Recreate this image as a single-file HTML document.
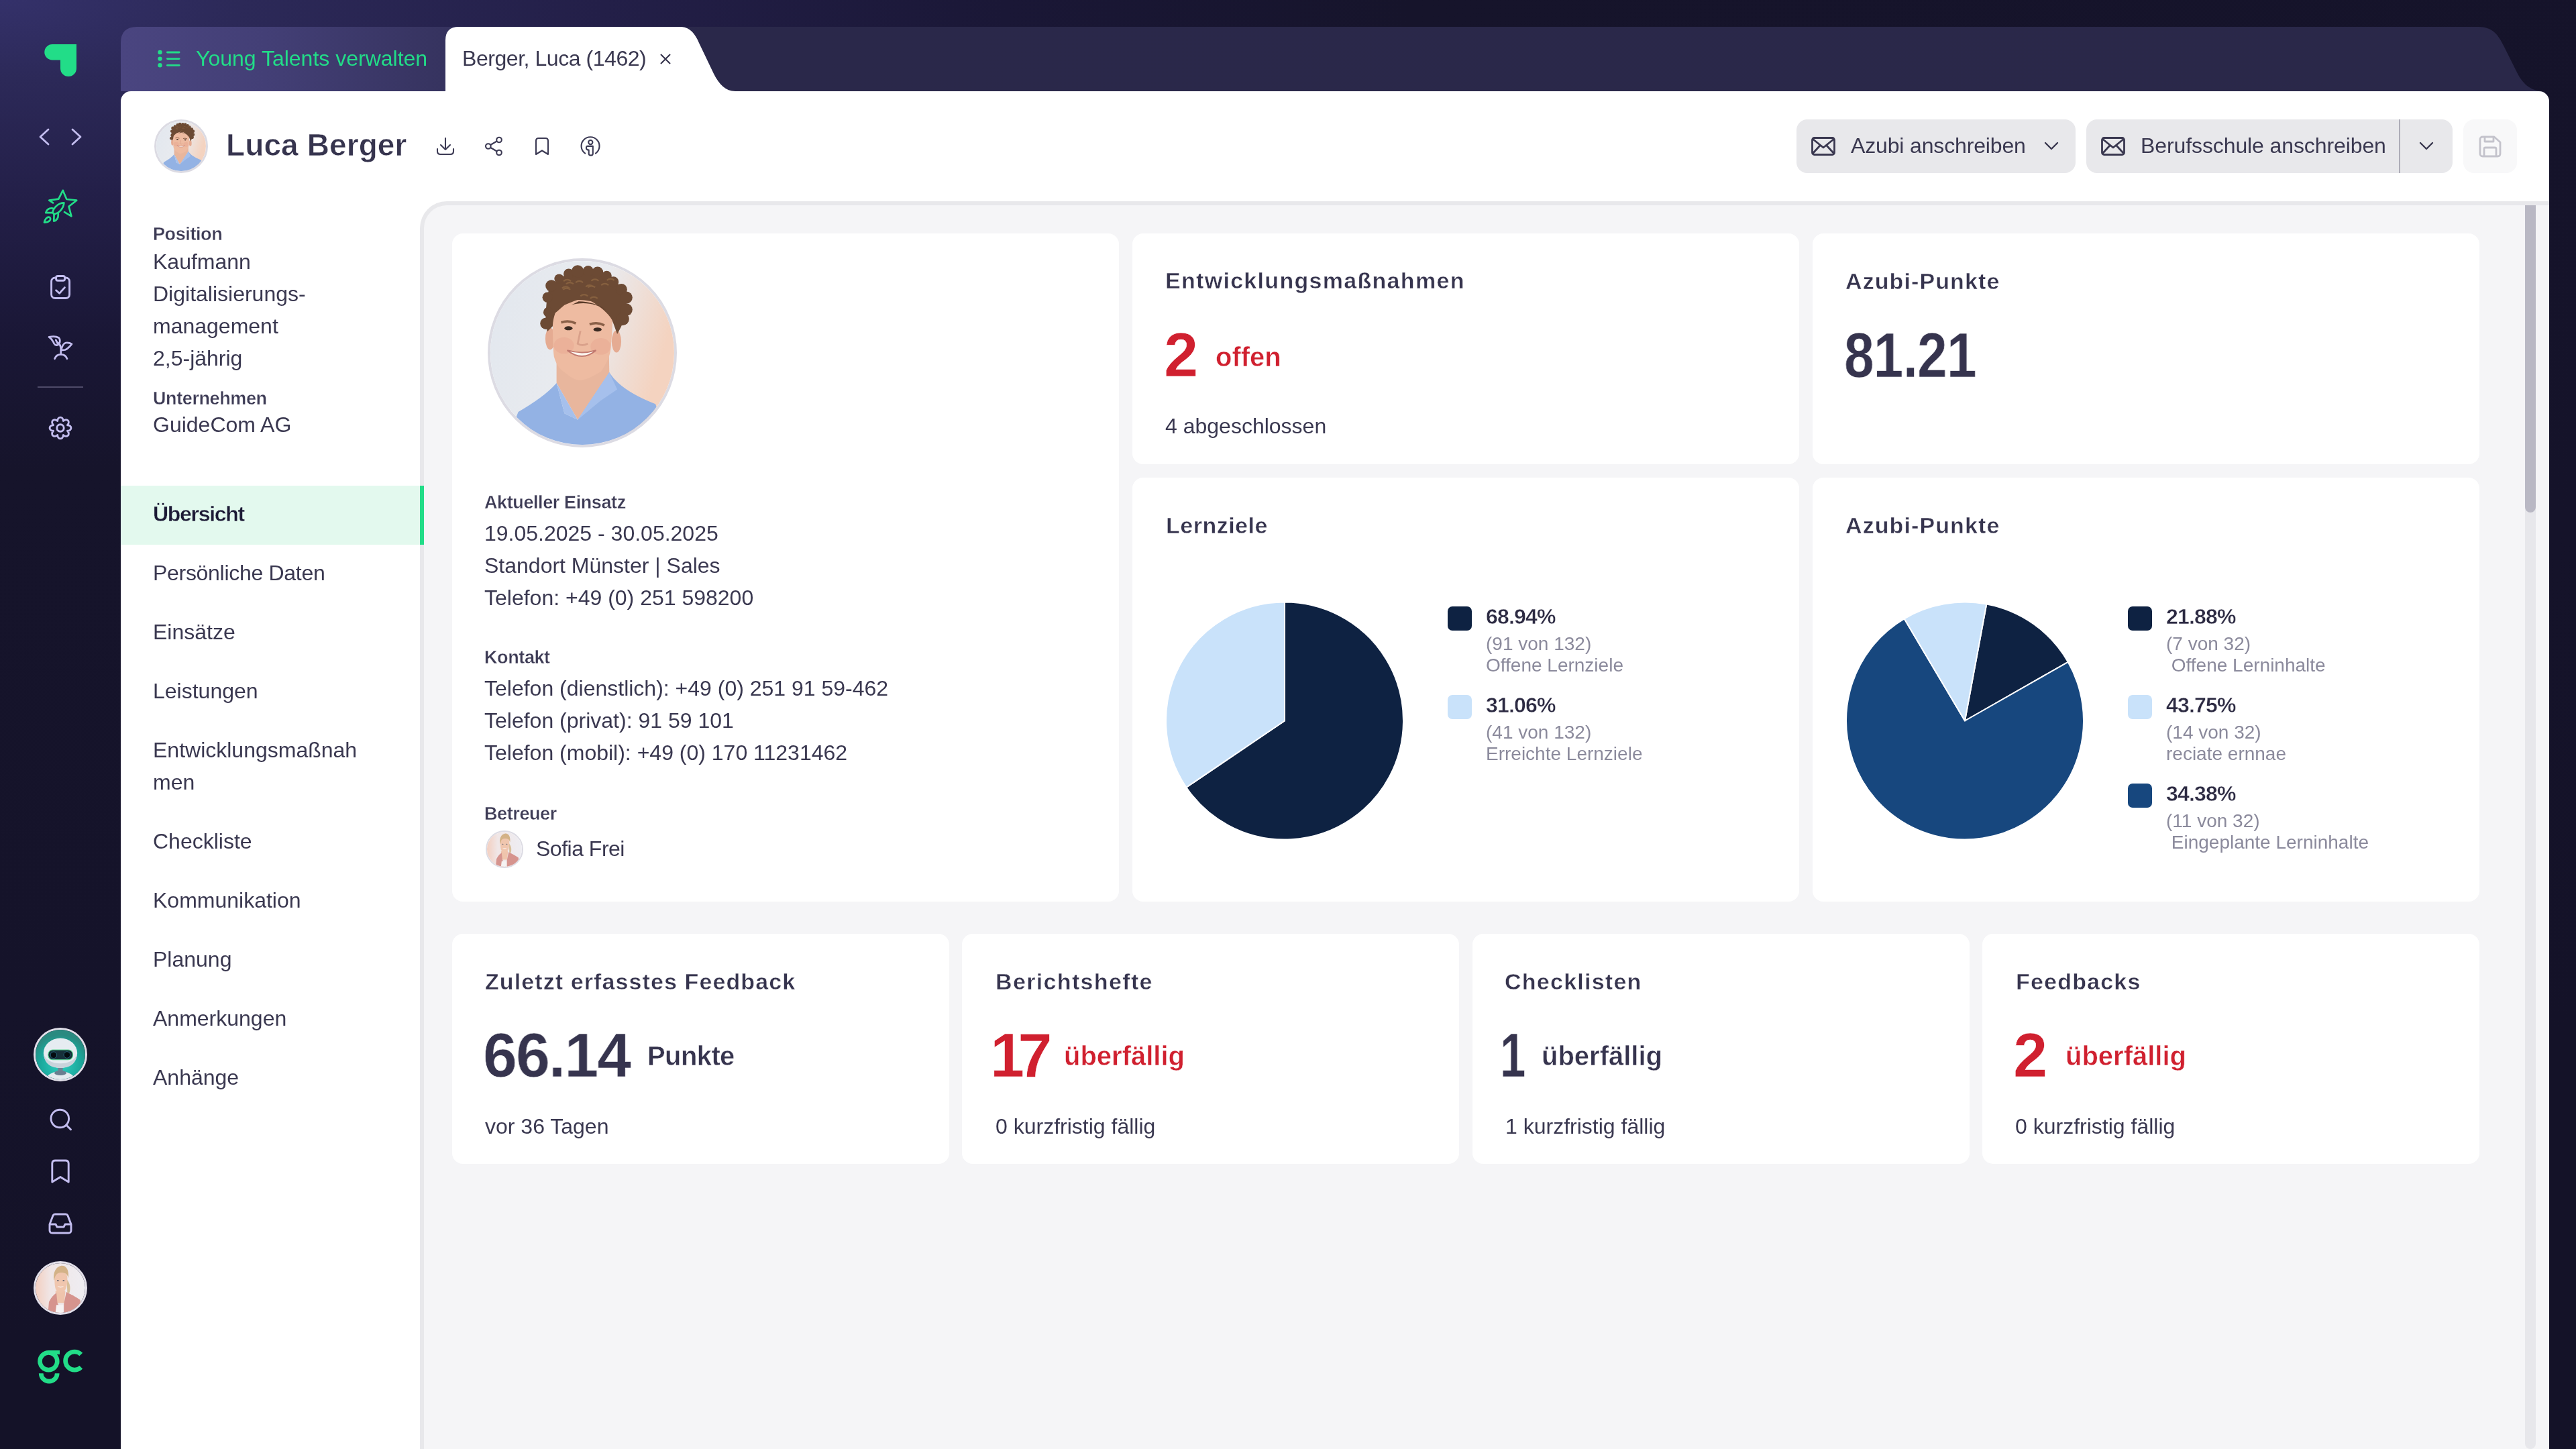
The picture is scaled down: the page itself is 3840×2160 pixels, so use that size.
<!DOCTYPE html>
<html><head><meta charset="utf-8">
<style>
*{box-sizing:border-box;margin:0;padding:0}
html,body{width:3840px;height:2160px;overflow:hidden;-webkit-font-smoothing:antialiased}
.a{will-change:transform}
body{position:relative;font-family:"Liberation Sans",sans-serif;color:#3a3850;
background:radial-gradient(6000px 2000px at 0 0,#34316a 0%,#2c2958 6%,#231f48 15%,#1a1736 25%,#16142b 35%,#15132a 75%,#141228 100%);}
.a{position:absolute;white-space:nowrap}
.t32{font-size:32px;line-height:32px}
.t28{font-size:28px;line-height:28px}
.lbl{font-size:27px;line-height:28px;font-weight:700;letter-spacing:-0.4px;color:#3d3b55;-webkit-text-stroke:0.35px #fff}
.ttl{font-size:34px;line-height:34px;font-weight:700;letter-spacing:1.1px;color:#36344e;-webkit-text-stroke:0.45px #fff}
.card{position:absolute;background:#fff;border-radius:16px}
.red{color:#d0202f}
svg{position:absolute;overflow:visible}
</style></head><body>


<svg width="0" height="0" style="position:absolute;left:0;top:0">
<defs>
<linearGradient id="gman" x1="0" y1="0" x2="1" y2="0.3"><stop offset="0" stop-color="#e2e7ee"/><stop offset="0.6" stop-color="#e9ebef"/><stop offset="1" stop-color="#f4d3c0"/></linearGradient>
<linearGradient id="gwom" x1="0" y1="0" x2="1" y2="0"><stop offset="0" stop-color="#f3cfc0"/><stop offset="0.3" stop-color="#f0e6e6"/><stop offset="1" stop-color="#eeedf2"/></linearGradient>
<radialGradient id="grob" cx="0.5" cy="0.7" r="0.6"><stop offset="0" stop-color="#2fd0c0"/><stop offset="0.7" stop-color="#1aa69a"/><stop offset="1" stop-color="#2a8a80"/></radialGradient>
<symbol id="man" viewBox="0 0 100 100">
<rect width="100" height="100" fill="url(#gman)"/>
<path d="M36,52 L36,66.4 L47.5,86.4 L64.7,60.6 L64.5,50 Z" fill="#e8b69d"/>
<path d="M8,100 L15.2,82.1 C24,77 31,72 36,66.4 L40.3,82.9 L47.5,86.4 L64.7,60.6 C68,66 75,72 89.8,77.8 L98,100 Z" fill="#93b2e4"/>
<path d="M36,66.4 L40.3,82.9 L47.5,86.4 Z M64.7,60.6 L47.5,86.4 L60,76 L69,69.9 Z" fill="#a6c0ec"/>
<ellipse cx="32.5" cy="42.3" rx="2.6" ry="6" fill="#e5ab92"/><ellipse cx="68.6" cy="43.8" rx="2.6" ry="6" fill="#e5ab92"/>
<path d="M33.9,28 L33.9,35.5 C34,44 34.2,49 34.6,52 C36,57 38,59 40.3,60.6 C44,63.5 46,64.9 48.9,64.9 C53,64.5 57,62 60.4,59.9 C63,56 65,52 65.4,48.4 C66,42 66.5,36 66.5,30 C63,24 56,21 48,21 C40,21 35,24 33.9,28 Z" fill="#eebba1"/>
<ellipse cx="40" cy="46" rx="5.5" ry="4.5" fill="#e39a88" opacity="0.3"/><ellipse cx="60" cy="46.5" rx="5.5" ry="4.5" fill="#e39a88" opacity="0.3"/>
<path d="M31,38.4 C30,34 30,30 30.3,26.9 C30.5,22 31,19 31.7,16.1 C33,13 34.5,12 36,11.1 C38,9 40,8 41.8,7.5 C44,6.5 46,6.2 47.5,6.1 C50,5.5 52,5.3 54.7,5.4 C57,6 59.5,6.8 61.8,7.5 C64,8.5 66.5,10 68.3,11.1 C70,13 71.5,14.5 72.6,16.1 C73.5,18 74,20 74,21.9 C74,24 73.8,26 73.3,28.3 C73,30.5 72.5,32 71.9,34.1 C71,36 70,38 69,39.8 C68,37 67,34 66.1,31.9 C65,30 63.5,28.5 61.8,26.9 C59,24.5 57,23 54.7,21.9 C52,21.5 50,21.2 47.5,21.2 C45,22 42.5,23 40.3,24 C38.5,25.5 37,27 35.3,28.3 C34.5,30.5 34,33 33.9,35.5 Z" fill="#6c4a34"/>
<circle cx="31.1" cy="19.8" r="2.8" fill="#6c4a34"/><circle cx="33.2" cy="13.5" r="3.2" fill="#6c4a34"/><circle cx="37.4" cy="9.7" r="2.6" fill="#6c4a34"/><circle cx="42.6" cy="7.0" r="2.8" fill="#6c4a34"/><circle cx="47.5" cy="5.7" r="3.4" fill="#6c4a34"/><circle cx="53.2" cy="5.4" r="2.8" fill="#6c4a34"/><circle cx="58.3" cy="6.2" r="3.1" fill="#6c4a34"/><circle cx="63.3" cy="8.1" r="2.7" fill="#6c4a34"/><circle cx="66.9" cy="11.4" r="2.9" fill="#6c4a34"/><circle cx="71.3" cy="15.5" r="3.1" fill="#6c4a34"/><circle cx="74.0" cy="19.9" r="3.3" fill="#6c4a34"/><circle cx="73.9" cy="26.5" r="3.4" fill="#6c4a34"/><circle cx="72.0" cy="31.6" r="3.5" fill="#6c4a34"/><circle cx="31.6" cy="27.9" r="2.8" fill="#6c4a34"/><circle cx="30.3" cy="34.0" r="3.2" fill="#6c4a34"/><path d="M46.4,11.7 q2,-1.6 4,0" stroke="#86603f" stroke-width="0.8" fill="none"/><path d="M54.9,10.8 q2,-1.6 4,0" stroke="#86603f" stroke-width="0.8" fill="none"/><path d="M51.9,14.0 q2,-1.6 4,0" stroke="#86603f" stroke-width="0.8" fill="none"/><path d="M39.5,15.6 q2,-1.6 4,0" stroke="#86603f" stroke-width="0.8" fill="none"/><path d="M39.0,14.8 q2,-1.6 4,0" stroke="#86603f" stroke-width="0.8" fill="none"/><path d="M39.8,11.0 q2,-1.6 4,0" stroke="#86603f" stroke-width="0.8" fill="none"/><path d="M49.0,19.1 q2,-1.6 4,0" stroke="#86603f" stroke-width="0.8" fill="none"/><path d="M41.2,12.5 q2,-1.6 4,0" stroke="#86603f" stroke-width="0.8" fill="none"/><path d="M54.3,20.4 q2,-1.6 4,0" stroke="#86603f" stroke-width="0.8" fill="none"/><path d="M53.0,14.4 q2,-1.6 4,0" stroke="#86603f" stroke-width="0.8" fill="none"/><path d="M63.4,10.5 q2,-1.6 4,0" stroke="#86603f" stroke-width="0.8" fill="none"/><path d="M60.3,13.2 q2,-1.6 4,0" stroke="#86603f" stroke-width="0.8" fill="none"/><path d="M44,24 C50,22 58,23 63,27 C60,24 54,22 48,22 Z" fill="#5a3c2a"/>
<path d="M38.5,33.5 Q42.5,32 46.5,34 M54,34.5 Q58,33 62,35" stroke="#8a6048" stroke-width="1.3" fill="none"/>
<ellipse cx="42.5" cy="36.6" rx="2.2" ry="1.1" fill="#3a2a22"/><ellipse cx="58.3" cy="37.3" rx="2.2" ry="1.1" fill="#3a2a22"/>
<path d="M49,38 L47.5,45 Q50,46.5 53,45" stroke="#d9a08a" stroke-width="1" fill="none"/>
<path d="M41.8,48.6 Q50,55 57.5,48.6 Q50,51 41.8,48.6 Z" fill="#fbf6f0" stroke="#c27a70" stroke-width="0.7"/>
</symbol>
<symbol id="wom" viewBox="0 0 100 100">
<rect width="100" height="100" fill="url(#gwom)"/>
<path d="M63,33 C70,40 71,52 68,60 L64,60 Z" fill="#d8bf9a"/>
<path d="M40,56 L42,80 L58,80 L60,56 Z" fill="#efc4ac"/>
<path d="M25,100 L27,78 C32,68 38,62 42,60 L44,80 L55,100 Z M57,100 L57,82 L62,58 C70,62 82,68 90,74 L92,100 Z" fill="#d6948e"/>
<path d="M42,84 L56,84 L56,100 L40,100 Z" fill="#f6f3f3"/>
<path d="M38.5,30 C38,22 43,18 51,18 C59,18 64,22 64,30 C64.5,42 62,52 58,56 C55,59 53,59.5 51,59.5 C49,59.5 46,59 43,56 C39,52 38,42 38.5,30 Z" fill="#f0c6ae"/>
<path d="M37,34 C35,20 40,7 52,5 C62,4 68,14 66,30 C64,22 60,19 51,19 C44,19 39,24 38,34 Z" fill="#d3b287"/>
<ellipse cx="45" cy="35" rx="2" ry="1" fill="#3a4a66"/><ellipse cx="56.5" cy="35" rx="2" ry="1" fill="#3a4a66"/>
<path d="M44,46 Q51,52 57,46 Q51,48.5 44,46 Z" fill="#fff"/>
</symbol>
<symbol id="rob" viewBox="0 0 100 100">
<rect width="100" height="100" fill="url(#grob)"/>
<rect x="45" y="76" width="10" height="8" fill="#6f8494"/>
<path d="M20,100 C24,90 34,84 50,84 C66,84 76,90 80,100 Z" fill="#e4ebef"/>
<ellipse cx="50" cy="87" rx="12" ry="5" fill="#6a7f90"/>
<ellipse cx="50" cy="47" rx="34" ry="30" fill="#e6ecf1"/>
<path d="M16,48 C18,70 32,77 50,77 C68,77 82,70 84,48 C80,62 66,68 50,68 C34,68 20,62 16,48 Z" fill="#c9d3db"/>
<rect x="25.5" y="40.5" width="49.5" height="20" rx="9" fill="#17303a" stroke="#58d890" stroke-width="1.4"/>
<circle cx="36.4" cy="51" r="6.5" fill="#050c10" stroke="#2b7e9c" stroke-width="1"/><circle cx="63.3" cy="50.7" r="6.5" fill="#050c10" stroke="#2b7e9c" stroke-width="1"/>
</symbol>
</defs></svg>

<!-- tab bar -->
<svg style="left:0;top:0" width="3840" height="140">
<defs>
<linearGradient id="tbg" gradientUnits="userSpaceOnUse" x1="180" y1="0" x2="3792" y2="0">
<stop offset="0" stop-color="#4a4580"/><stop offset="0.06" stop-color="#433f76"/><stop offset="0.134" stop-color="#36335f"/><stop offset="0.24" stop-color="#2a284a"/><stop offset="1" stop-color="#2a2849"/>
</linearGradient>
</defs>
<path d="M180,136 V64 Q180,40 204,40 H3694 C3716,40 3724,52 3732,68 L3752,108 C3762,128 3775,136 3792,136 Z" fill="url(#tbg)"/>
<path d="M664,136 V60 Q664,40 684,40 H1014 C1028,40 1036,50 1042,64 L1064,110 C1072,126 1082,136 1096,136 Z" fill="#fff"/>
</svg>

<!-- white panel -->
<div class="a" style="left:180px;top:136px;width:3620px;height:2024px;background:#fff;border-radius:15px 15px 0 0"></div>


<!-- sidebar -->
<svg style="left:66px;top:66px" width="48" height="48" viewBox="0 0 48 48"><path d="M12,0 H48 V36 A12,12 0 0 1 24,36 V23.5 H12 A11.75,11.75 0 0 1 12,0 Z" fill="#22dd88"/></svg>
<svg style="left:52px;top:186px" width="76" height="36" viewBox="0 0 76 36" fill="none" stroke="#c3bdef" stroke-width="2.8" stroke-linecap="round" stroke-linejoin="round"><path d="M20,7 L8,18 L20,29"/><path d="M56,7 L68,18 L56,29"/></svg>
<svg style="left:60px;top:278px" width="60" height="60" viewBox="0 0 60 60" fill="none" stroke="#22dd88" stroke-width="2.7" stroke-linejoin="round" stroke-linecap="round">
<path d="M19,24.4 L13.3,20.7 L27.3,18.6 L33.7,5.8 L39.3,19 L54.2,20.7 L42.6,29.8 L46.4,44.3 L36,38.1"/>
<path d="M35.4,24.4 C27,24.6 20,31 18.4,38.5 L20.3,41.3 C28,40 34.5,33 35.4,24.4 Z"/>
<path d="M18.8,32.6 C14,32 10,33.5 8.2,39.2 L17.5,39.2"/>
<path d="M20.6,42 L20.2,51.6 C24,51 27,48 26.8,40.8"/>
<path d="M6,53.6 C7,48.5 10,45.2 13,45.6 C15.5,46 15.7,49 14,51 C12,53 9,53.6 6,53.6 Z"/>
</svg>
<svg style="left:72px;top:410px" width="36" height="36" viewBox="0 0 36 36" fill="none" stroke="#c3bdef" stroke-width="2.9" stroke-linejoin="round" stroke-linecap="round">
<rect x="4.6" y="4" width="27" height="30.5" rx="5.5"/><rect x="11.6" y="1.5" width="13" height="6.8" rx="2.5" fill="#1f1c40"/><path d="M11.6,22.7 L16.6,27.3 L24.4,18.6"/></svg>
<svg style="left:66px;top:490px" width="48" height="56" viewBox="0 0 48 56" fill="none" stroke="#c3bdef" stroke-width="2.7" stroke-linejoin="round" stroke-linecap="round">
<path d="M7,12.4 C12,11.3 18,11.3 21.6,13.5 C23.8,15.5 23.8,20 22,23 C20,25.5 16,25 14.5,22 C13,18 11,15 7,12.4 Z"/>
<path d="M17.3,16.8 L19.6,21.6"/>
<path d="M19.6,20.5 C22.8,22.5 24.7,25.5 24.7,30 V37.5"/>
<path d="M25.2,31.8 C26.5,26 28,22 32,21 C36,20.5 39,21.5 41,22.8 C38,26.5 35,30 31,31.5 C29,32 27,32 25.2,31.8 Z"/>
<path d="M15.5,44.8 C17,40.5 20.5,38.3 24.7,38.3 C29,38.3 32.5,40.5 34,44.8"/>
</svg>
<div class="a" style="left:56px;top:576px;width:68px;height:2px;background:#4e4a68"></div>
<svg style="left:72px;top:620px" width="36" height="36" viewBox="0 0 36 36" fill="none" stroke="#c3bdef" stroke-width="2.9" stroke-linejoin="round"><path d="M13.68,7.56 C13.91,0.27 22.09,0.27 22.32,7.56 C27.64,2.57 33.43,8.36 28.44,13.68 C35.73,13.91 35.73,22.09 28.44,22.32 C33.43,27.64 27.64,33.43 22.32,28.44 C22.09,35.73 13.91,35.73 13.68,28.44 C8.36,33.43 2.57,27.64 7.56,22.32 C0.27,22.09 0.27,13.91 7.56,13.68 C2.57,8.36 8.36,2.57 13.68,7.56 Z"/><circle cx="18" cy="18" r="5.2"/></svg>

<!-- robot avatar -->
<div class="a" style="left:50px;top:1532px;width:80px;height:80px;border-radius:50%;border:3px solid #e2dfe9;overflow:hidden"><svg width="74" height="74" style="position:absolute;left:0;top:0"><use href="#rob"/></svg></div>
<svg style="left:72px;top:1650px" width="36" height="36" viewBox="0 0 36 36" fill="none" stroke="#c3bdef" stroke-width="2.9" stroke-linecap="round"><circle cx="17.3" cy="17.5" r="13.3"/><path d="M26.8,27 L33.5,33.8"/></svg>
<svg style="left:76px;top:1728px" width="28" height="36" viewBox="0 0 28 36" fill="none" stroke="#c3bdef" stroke-width="2.9" stroke-linejoin="round"><path d="M1.8,6.5 Q1.8,2 6.3,2 H21.7 Q26.2,2 26.2,6.5 V34 L14,26.5 L1.8,34 Z"/></svg>
<svg style="left:72px;top:1808px" width="36" height="32" viewBox="0 0 36 32" fill="none" stroke="#c3bdef" stroke-width="2.9" stroke-linejoin="round"><path d="M2,17 L7,4 Q8,2 10,2 H26 Q28,2 29,4 L34,17 V26 Q34,30 30,30 H6 Q2,30 2,26 Z"/><path d="M2,17 H11 L13,21 H23 L25,17 H34"/></svg>
<!-- user avatar -->
<div class="a" style="left:50px;top:1880px;width:80px;height:80px;border-radius:50%;border:3px solid #e2dfe9;overflow:hidden"><svg width="74" height="74" style="position:absolute;left:0;top:0"><use href="#wom"/></svg></div>
<svg style="left:50px;top:2005px" width="80" height="65" viewBox="0 0 80 65" fill="none" stroke="#22dd88" stroke-width="6.7">
<circle cx="22.4" cy="24.2" r="12.85"/><rect x="22.4" y="8" width="16.6" height="6" fill="#22dd88" stroke="none"/>
<path d="M11.2,42.2 A12,12 0 0 0 35.2,42.2"/>
<path d="M70.8,14 A13.6,13.6 0 1 0 70.8,33.2"/></svg>

<!-- tab contents -->
<svg style="left:234px;top:74px" width="36" height="28" viewBox="0 0 36 28" fill="#22dd88"><circle cx="4.5" cy="4" r="3.2"/><circle cx="4.5" cy="13.6" r="3.2"/><circle cx="4.5" cy="23.3" r="3.2"/><rect x="14" y="2.6" width="20.5" height="2.8" rx="1.4"/><rect x="14" y="12.2" width="20.5" height="2.8" rx="1.4"/><rect x="14" y="21.9" width="20.5" height="2.8" rx="1.4"/></svg>
<div class="a t32" style="left:292px;top:70.5px;color:#22dd88">Young Talents verwalten</div>
<div class="a t32" style="left:689px;top:70.5px;color:#3a3850;letter-spacing:-0.45px">Berger, Luca (1462)</div>
<svg style="left:984px;top:80px" width="16" height="16" viewBox="0 0 16 16" stroke="#3a3850" stroke-width="2.2"><path d="M1,1 L15,15 M15,1 L1,15"/></svg>


<!-- header -->
<div class="a" style="left:230px;top:178px;width:80px;height:80px;border-radius:50%;border:3px solid #dcdbe3;overflow:hidden"><svg width="74" height="74" style="position:absolute;left:0;top:0"><use href="#man"/></svg></div>
<div class="a" style="left:337px;top:193px;font-size:46px;line-height:46px;font-weight:700;color:#36344e;letter-spacing:0.1px;-webkit-text-stroke:0.6px #fff">Luca Berger</div>
<svg style="left:650px;top:204px" width="28" height="28" viewBox="0 0 28 28" fill="none" stroke="#3c3a54" stroke-width="2.1" stroke-linecap="round" stroke-linejoin="round"><path d="M14,2 V19 M7,12 L14,19 L21,12"/><path d="M2,18 V21.5 Q2,26 6.5,26 H21.5 Q26,26 26,21.5 V18"/></svg>
<svg style="left:722px;top:203px" width="28" height="30" viewBox="0 0 28 30" fill="none" stroke="#3c3a54" stroke-width="2.1"><circle cx="22" cy="5.5" r="3.8"/><circle cx="5.8" cy="15" r="3.8"/><circle cx="22" cy="24.5" r="3.8"/><path d="M9.2,13 L18.6,7.5 M9.2,17 L18.6,22.5"/></svg>
<svg style="left:796px;top:204px" width="24" height="28" viewBox="0 0 24 28" fill="none" stroke="#3c3a54" stroke-width="2.1" stroke-linejoin="round"><path d="M3,6 Q3,2 7,2 H17 Q21,2 21,6 V26 L12,20.5 L3,26 Z"/></svg>
<svg style="left:865px;top:203px" width="30" height="30" viewBox="0 0 30 30" fill="none" stroke="#3c3a54" stroke-width="2.1" stroke-linecap="round" stroke-linejoin="round"><path d="M7.2,25.7 A13.5,13.5 0 1 1 22.9,25.7"/><circle cx="15.3" cy="9.1" r="3.1"/><path d="M10.8,14.9 H18.8 V26 Q18.8,28.6 15.8,28.6 Q12.7,28.6 12.7,26 V20.5 Q8.9,20.5 8.9,17.7 Q8.9,14.9 10.8,14.9 Z"/></svg>

<!-- buttons -->
<div class="a" style="left:2678px;top:178px;width:416px;height:80px;border-radius:16px;background:#e8e8eb"></div>
<svg style="left:2700px;top:204px" width="36" height="28" viewBox="0 0 36 28" fill="none" stroke="#3a3850" stroke-width="2.8" stroke-linejoin="round"><rect x="1.5" y="1.5" width="33" height="25" rx="3"/><path d="M2,3 L18,16 L34,3 M2,25 L13,13 M34,25 L23,13"/></svg>
<div class="a t32" style="left:2759px;top:201px;color:#3a3850;letter-spacing:-0.15px">Azubi anschreiben</div>
<svg style="left:3047px;top:211px" width="22" height="14" viewBox="0 0 22 14" fill="none" stroke="#3a3850" stroke-width="2.4" stroke-linecap="round" stroke-linejoin="round"><path d="M2,2 L11,11 L20,2"/></svg>

<div class="a" style="left:3110px;top:178px;width:546px;height:80px;border-radius:16px;background:#e8e8eb"></div>
<div class="a" style="left:3576px;top:178px;width:2px;height:80px;background:#aeadb8"></div>
<svg style="left:3132px;top:204px" width="36" height="28" viewBox="0 0 36 28" fill="none" stroke="#3a3850" stroke-width="2.8" stroke-linejoin="round"><rect x="1.5" y="1.5" width="33" height="25" rx="3"/><path d="M2,3 L18,16 L34,3 M2,25 L13,13 M34,25 L23,13"/></svg>
<div class="a t32" style="left:3191px;top:201px;color:#3a3850;letter-spacing:-0.1px">Berufsschule anschreiben</div>
<svg style="left:3606px;top:211px" width="22" height="14" viewBox="0 0 22 14" fill="none" stroke="#3a3850" stroke-width="2.4" stroke-linecap="round" stroke-linejoin="round"><path d="M2,2 L11,11 L20,2"/></svg>

<div class="a" style="left:3672px;top:178px;width:80px;height:80px;border-radius:16px;background:#f8f8f9"></div>
<svg style="left:3695px;top:202px" width="34" height="33" viewBox="0 0 34 33" fill="none" stroke="#c4c3cc" stroke-width="2.8" stroke-linejoin="round"><path d="M2,6 Q2,2 6,2 H23 L32,10 V27 Q32,31 28,31 H6 Q2,31 2,27 Z"/><path d="M9,2 V9 H22 V2"/><path d="M8,31 V20 Q8,18 10,18 H24 Q26,18 26,20 V31"/></svg>

<!-- left info -->
<div class="a lbl" style="left:228px;top:335px">Position</div>
<div class="a" style="left:228px;top:366px;font-size:32px;line-height:48px;white-space:normal;width:380px">Kaufmann<br>Digitalisierungs-<br>management<br>2,5-jährig</div>
<div class="a lbl" style="left:228px;top:579.5px">Unternehmen</div>
<div class="a t32" style="left:228px;top:617px">GuideCom AG</div>

<!-- menu -->
<div class="a" style="left:180px;top:724px;width:446px;height:88px;background:#e3f9ee"></div>
<div class="a t32" style="left:228px;top:750px;font-weight:700;color:#1c1a35;letter-spacing:-1.3px;-webkit-text-stroke:0.35px #e3f9ee">Übersicht</div>
<div class="a t32" style="left:228px;top:838px;letter-spacing:-0.3px">Persönliche Daten</div>
<div class="a t32" style="left:228px;top:926px">Einsätze</div>
<div class="a t32" style="left:228px;top:1014px">Leistungen</div>
<div class="a t32" style="left:228px;top:1101.5px">Entwicklungsmaßnah</div>
<div class="a t32" style="left:228px;top:1150px">men</div>
<div class="a t32" style="left:228px;top:1237.5px">Checkliste</div>
<div class="a t32" style="left:228px;top:1325.5px">Kommunikation</div>
<div class="a t32" style="left:228px;top:1413.5px">Planung</div>
<div class="a t32" style="left:228px;top:1501.5px">Anmerkungen</div>
<div class="a t32" style="left:228px;top:1589.5px">Anhänge</div>

<!-- content container -->
<div class="a" style="left:626px;top:300px;width:3174px;height:1860px;background:#f5f5f7;border-top:6px solid #e8e8eb;border-left:6px solid #e8e8eb;border-top-left-radius:40px"></div>
<div class="a" style="left:626px;top:724px;width:6px;height:88px;background:#22dd88"></div>
<div class="a" style="left:3764px;top:306px;width:16px;height:1854px;border-radius:8px;background:#e7e7eb"></div>
<div class="a" style="left:3764px;top:306px;width:16px;height:458px;border-radius:0 0 8px 8px;background:#b9b8c4"></div>


<!-- cards -->
<div class="card" style="left:674px;top:348px;width:994px;height:996px"></div>
<div class="card" style="left:1688px;top:348px;width:994px;height:344px"></div>
<div class="card" style="left:2702px;top:348px;width:994px;height:344px"></div>
<div class="card" style="left:1688px;top:712px;width:994px;height:632px"></div>
<div class="card" style="left:2702px;top:712px;width:994px;height:632px"></div>
<div class="card" style="left:674px;top:1392px;width:741px;height:343px"></div>
<div class="card" style="left:1434px;top:1392px;width:741px;height:343px"></div>
<div class="card" style="left:2195px;top:1392px;width:741px;height:343px"></div>
<div class="card" style="left:2955px;top:1392px;width:741px;height:343px"></div>

<!-- card1 -->
<div class="a" style="left:727px;top:385px;width:282px;height:282px;border-radius:50%;border:4px solid #dcdbe3;overflow:hidden"><svg width="274" height="274" style="position:absolute;left:0;top:0"><use href="#man"/></svg></div>
<div class="a lbl" style="left:722px;top:735px">Aktueller Einsatz</div>
<div class="a" style="left:722px;top:770.7px;font-size:32px;line-height:48px;white-space:pre">19.05.2025 - 30.05.2025
Standort Münster | Sales
Telefon: +49 (0) 251 598200</div>
<div class="a lbl" style="left:722px;top:966.4px">Kontakt</div>
<div class="a" style="left:722px;top:1002.3px;font-size:32px;line-height:48px;white-space:pre">Telefon (dienstlich): +49 (0) 251 91 59-462
Telefon (privat): 91 59 101
Telefon (mobil): +49 (0) 170 11231462</div>
<div class="a lbl" style="left:722px;top:1199px">Betreuer</div>
<div class="a" style="left:724px;top:1238px;width:56px;height:56px;border-radius:50%;border:2px solid #dcdbe3;overflow:hidden"><svg width="52" height="52" style="position:absolute;left:0;top:0"><use href="#wom"/></svg></div>
<div class="a t32" style="left:798.5px;top:1248.5px;letter-spacing:-0.5px">Sofia Frei</div>

<!-- card2 -->
<div class="a ttl" style="left:1737px;top:401.2px;letter-spacing:1.3px">Entwicklungsmaßnahmen</div>
<div class="a red" style="left:1735px;top:482.8px;font-size:92px;line-height:92px;font-weight:700;-webkit-text-stroke:0.6px #fff">2</div>
<div class="a red" style="left:1812px;top:512.1px;font-size:40px;line-height:40px;font-weight:700;-webkit-text-stroke:0.5px #fff">offen</div>
<div class="a t32" style="left:1737px;top:619px">4 abgeschlossen</div>

<!-- card3 -->
<div class="a ttl" style="left:2751px;top:401.6px">Azubi-Punkte</div>
<div class="a" style="left:2749px;top:482px;font-size:95px;line-height:95px;font-weight:700;-webkit-text-stroke:0.6px #fff;color:#36344e;transform:scaleX(0.845);transform-origin:0 0;letter-spacing:-1px">81.21</div>

<!-- card4 -->
<div class="a ttl" style="left:1738px;top:766.2px;letter-spacing:0.5px">Lernziele</div>
<div class="a" style="left:2158px;top:904px;width:36px;height:36px;border-radius:7px;background:#0e2242"></div>
<div class="a" style="left:2158px;top:1036px;width:36px;height:36px;border-radius:7px;background:#c9e2fa"></div>
<div class="a t32" style="left:2214.6px;top:903.3px;font-weight:700;letter-spacing:-0.8px;color:#2c2a42;-webkit-text-stroke:0.4px #fff">68.94%</div>
<div class="a" style="left:2214.6px;top:944px;font-size:28px;line-height:32px;white-space:pre;color:#8b8a9c">(91 von 132)
Offene Lernziele</div>
<div class="a t32" style="left:2214.6px;top:1035.1px;font-weight:700;letter-spacing:-0.8px;color:#2c2a42;-webkit-text-stroke:0.4px #fff">31.06%</div>
<div class="a" style="left:2214.6px;top:1075.8px;font-size:28px;line-height:32px;white-space:pre;color:#8b8a9c">(41 von 132)
Erreichte Lernziele</div>

<!-- card5 -->
<div class="a ttl" style="left:2751px;top:766.2px">Azubi-Punkte</div>
<div class="a" style="left:3172px;top:904px;width:36px;height:36px;border-radius:7px;background:#0e2242"></div>
<div class="a" style="left:3172px;top:1036px;width:36px;height:36px;border-radius:7px;background:#c9e2fa"></div>
<div class="a" style="left:3172px;top:1168px;width:36px;height:36px;border-radius:7px;background:#17477e"></div>
<div class="a t32" style="left:3228.6px;top:903.3px;font-weight:700;letter-spacing:-0.8px;color:#2c2a42;-webkit-text-stroke:0.4px #fff">21.88%</div>
<div class="a" style="left:3228.6px;top:944px;font-size:28px;line-height:32px;white-space:pre;color:#8b8a9c">(7 von 32)
 Offene Lerninhalte</div>
<div class="a t32" style="left:3228.6px;top:1035.1px;font-weight:700;letter-spacing:-0.8px;color:#2c2a42;-webkit-text-stroke:0.4px #fff">43.75%</div>
<div class="a" style="left:3228.6px;top:1075.8px;font-size:28px;line-height:32px;white-space:pre;color:#8b8a9c">(14 von 32)
reciate ernnae</div>
<div class="a t32" style="left:3228.6px;top:1167.1px;font-weight:700;letter-spacing:-0.8px;color:#2c2a42;-webkit-text-stroke:0.4px #fff">34.38%</div>
<div class="a" style="left:3228.6px;top:1207.8px;font-size:28px;line-height:32px;white-space:pre;color:#8b8a9c">(11 von 32)
 Eingeplante Lerninhalte</div>

<!-- row3 -->
<div class="a ttl" style="left:723px;top:1446.2px">Zuletzt erfasstes Feedback</div>
<div class="a" style="left:720px;top:1527px;font-size:92px;line-height:92px;font-weight:700;-webkit-text-stroke:0.6px #fff;color:#36344e;letter-spacing:-2px;transform:scaleX(0.995);transform-origin:0 0">66.14</div>
<div class="a" style="left:965px;top:1554px;font-size:40px;line-height:40px;font-weight:700;-webkit-text-stroke:0.5px #fff;color:#36344e;letter-spacing:-0.6px">Punkte</div>
<div class="a t32" style="left:723px;top:1663px">vor 36 Tagen</div>

<div class="a ttl" style="left:1484px;top:1446.2px;letter-spacing:1.35px">Berichtshefte</div>
<div class="a red" style="left:1476px;top:1527px;font-size:92px;line-height:92px;font-weight:700;-webkit-text-stroke:0.6px #fff;letter-spacing:-10px">17</div>
<div class="a red" style="left:1586px;top:1554px;font-size:40px;line-height:40px;font-weight:700;-webkit-text-stroke:0.5px #fff">überfällig</div>
<div class="a t32" style="left:1484px;top:1663px">0 kurzfristig fällig</div>

<div class="a ttl" style="left:2243px;top:1446.2px;letter-spacing:1.25px">Checklisten</div>
<div class="a" style="left:2236px;top:1527px;font-size:92px;line-height:92px;font-weight:700;-webkit-text-stroke:0.6px #fff;color:#36344e;transform:scaleX(0.75);transform-origin:0 0">1</div>
<div class="a" style="left:2298px;top:1554px;font-size:40px;line-height:40px;font-weight:700;-webkit-text-stroke:0.5px #fff;color:#36344e">überfällig</div>
<div class="a t32" style="left:2244px;top:1663px">1 kurzfristig fällig</div>

<div class="a ttl" style="left:3005px;top:1446.2px;letter-spacing:1.2px">Feedbacks</div>
<div class="a red" style="left:3001px;top:1527px;font-size:92px;line-height:92px;font-weight:700;-webkit-text-stroke:0.6px #fff">2</div>
<div class="a red" style="left:3079px;top:1554px;font-size:40px;line-height:40px;font-weight:700;-webkit-text-stroke:0.5px #fff">überfällig</div>
<div class="a t32" style="left:3004px;top:1663px">0 kurzfristig fällig</div>
<svg style="left:0;top:0" width="3840" height="2160"><path d="M1915,1074.5 L1915.0,897.5 A177,177 0 1 1 1768.43,1173.73 Z" fill="#0e2242" stroke="#fff" stroke-width="2" stroke-linejoin="round"/><path d="M1915,1074.5 L1768.43,1173.73 A177,177 0 0 1 1915.0,897.5 Z" fill="#c9e2fa" stroke="#fff" stroke-width="2" stroke-linejoin="round"/><path d="M2929,1074.5 L2961.26,900.46 A177,177 0 0 1 3082.75,986.8 Z" fill="#0e2242" stroke="#fff" stroke-width="2" stroke-linejoin="round"/><path d="M2929,1074.5 L3082.75,986.8 A177,177 0 1 1 2838.63,922.31 Z" fill="#17477e" stroke="#fff" stroke-width="2" stroke-linejoin="round"/><path d="M2929,1074.5 L2838.63,922.31 A177,177 0 0 1 2961.26,900.46 Z" fill="#c9e2fa" stroke="#fff" stroke-width="2" stroke-linejoin="round"/></svg>
</body></html>
